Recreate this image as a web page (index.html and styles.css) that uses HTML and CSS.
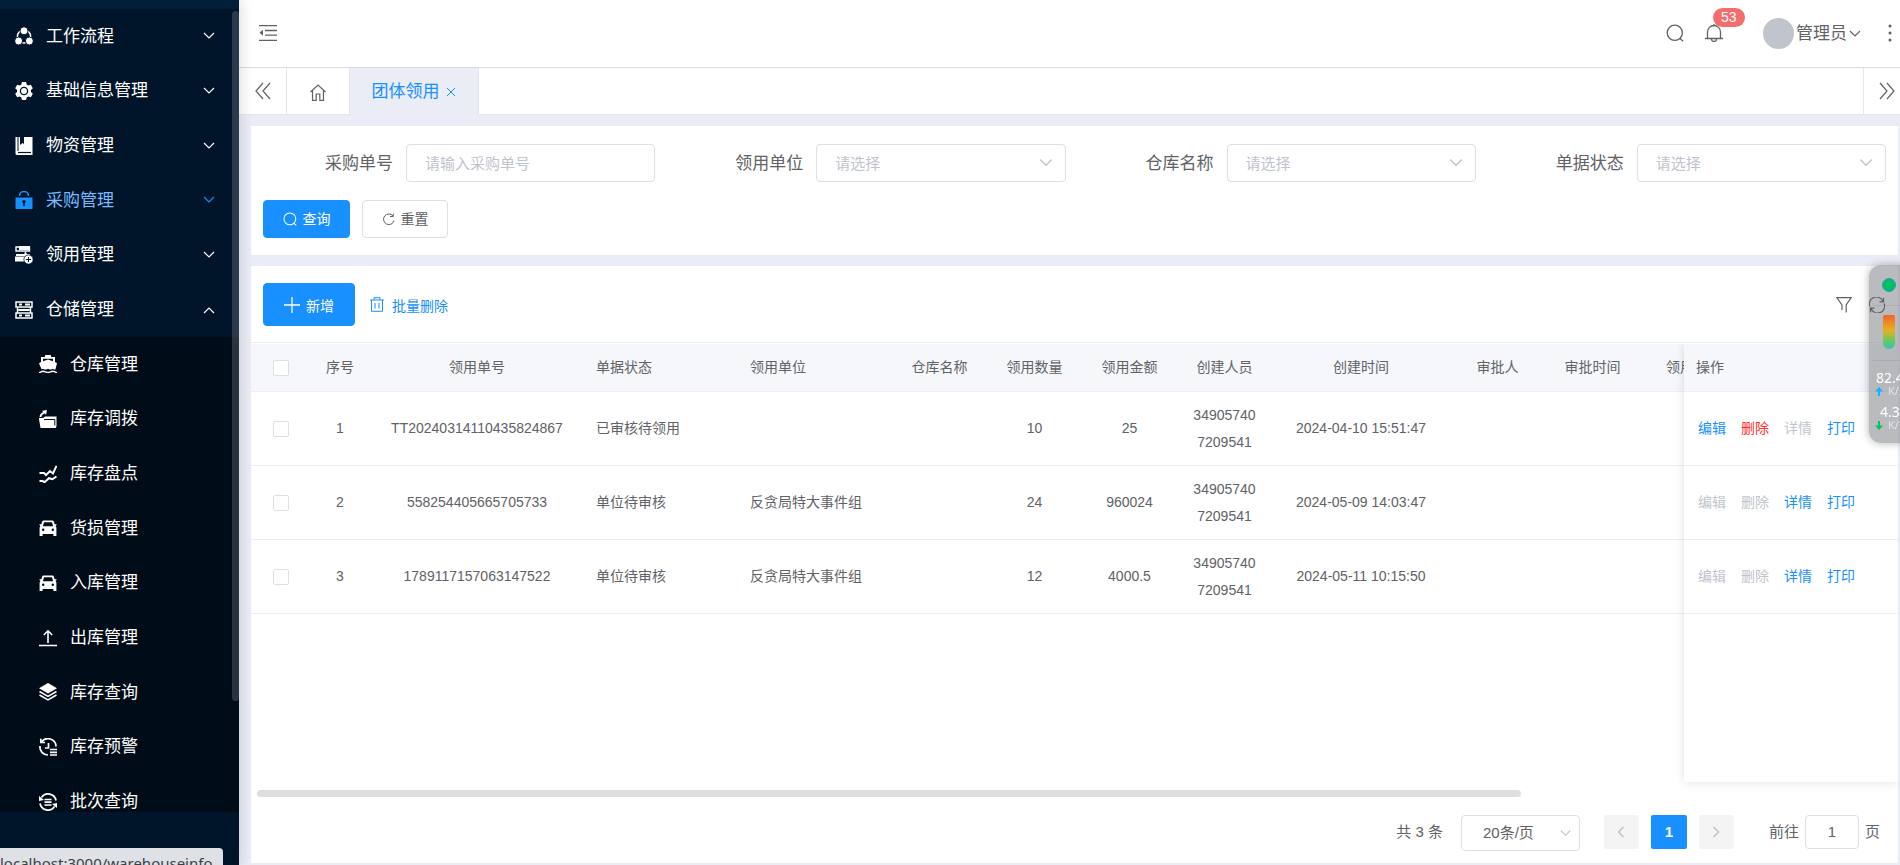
FILE: index.html
```html
<!DOCTYPE html>
<html lang="zh-CN">
<head>
<meta charset="utf-8">
<title>团体领用</title>
<link rel="stylesheet" href="styles.css">
</head>
<body>
<svg class="sprite" aria-hidden="true">
  <symbol id="down" viewBox="0 0 12 12"><path d="M1 3l5 5 5-5" fill="none" stroke="currentColor" stroke-width="1.2"/></symbol>
  <symbol id="up" viewBox="0 0 12 12"><path d="M1 9l5-5 5 5" fill="none" stroke="currentColor" stroke-width="1.2"/></symbol>
  <symbol id="search" viewBox="0 0 18 18"><g fill="none" stroke="currentColor" stroke-width="1.3"><circle cx="8.8" cy="8.8" r="7.6"/><path d="M13.700 14.200l3.300 3"/></g></symbol>
  <symbol id="car" viewBox="0 0 18 18"><path fill="currentColor" fill-rule="evenodd" d="M4.6 1.5h8.8c.7 0 1.200.4 1.400 1l.9 3 1.300-.6.8 1.100-1.300.8.9 1.700V17h-3v-2H3.600v2h-3V8.500l.9-1.700L.2 6 1 4.900l1.300.6.9-3c.2-.6.7-1 1.400-1zM5 3.200L3.900 7.200h10.200L13 3.200zM4.200 9.500a1.200 1.200 0 100 2.400 1.200 1.200 0 000-2.400zm9.600 0a1.200 1.200 0 100 2.400 1.200 1.200 0 000-2.400z"/></symbol>
</svg>
<div class="app">
  <nav class="sidebar">
    <div class="menu-scroll">
      <ul class="menu">
        <li><a href="#"><svg class="ico" viewBox="0 0 18 18"><circle cx="9" cy="9.500" r="6.600" fill="none" stroke="currentColor" stroke-width="1.500"/><g fill="currentColor" stroke="#001529" stroke-width="1"><circle cx="9" cy="3.800" r="4"/><circle cx="3.600" cy="14" r="4"/><circle cx="14.400" cy="14" r="4"/></g></svg><span>工作流程</span><svg class="arrow"><use href="#down"/></svg></a></li>
        <li><a href="#"><svg class="ico" viewBox="0 0 18 18"><path fill="currentColor" d="M7 0h4l.7 2.600 1.500.9 2.600-.8 2 3.500L16 8v2l1.800 1.800-2 3.500-2.600-.8-1.500.9L11 18H7l-.7-2.600-1.500-.9-2.600.8-2-3.500L2 10V8L.2 6.200l2-3.500 2.600.8 1.500-.9z"/><circle cx="9" cy="9" r="3.600" fill="none" stroke="#001529" stroke-width="1.300"/></svg><span>基础信息管理</span><svg class="arrow"><use href="#down"/></svg></a></li>
        <li><a href="#"><svg class="ico" viewBox="0 0 18 18"><path fill="currentColor" d="M.5 0h2v14.500h-2zM3.500 0H5v8l2.500-2L9 7V0h8.500v14H3.500zM.5 14H17.500v4H2a1.500 1.500 0 01-1.500-1.500z"/><path d="M3 15.500h13" stroke="#001529" stroke-width="1.200"/></svg><span>物资管理</span><svg class="arrow"><use href="#down"/></svg></a></li>
        <li class="active"><a href="#"><svg class="ico" viewBox="0 0 18 18"><path d="M4.600 5V4.500a4.400 4.000 0 018.800 0V5" fill="none" stroke="currentColor" stroke-width="1.500"/><path fill="currentColor" d="M.5 6.500h17V18H.5z"/><circle cx="9" cy="10.800" r="1.700" fill="#001529"/><path d="M9 11v4" stroke="#001529" stroke-width="1.500"/></svg><span>采购管理</span><svg class="arrow"><use href="#down"/></svg></a></li>
        <li><a href="#"><svg class="ico" viewBox="0 0 18 18"><path d="M1 1h13.500v4H1z" fill="none" stroke="currentColor" stroke-width="1.400"/><path fill="currentColor" d="M4 0h11v4H4zM1 8h10v2H1zM10 5l2 3h3v2H9zM0 10.500h10v5H0z"/><circle cx="13.500" cy="13.500" r="4.600" fill="currentColor" stroke="#001529" stroke-width=".8"/><path d="M11 13.500h5M13.500 11v5" stroke="#001529"/></svg><span>领用管理</span><svg class="arrow"><use href="#down"/></svg></a></li>
        <li><a href="#"><svg class="ico" viewBox="0 0 18 18"><g fill="none" stroke="currentColor" stroke-width="1.500"><path d="M1 1h16v5H1zM1 12h16v5H1zM2.500 9h13M2.500 6v6M15.500 6v6"/><path d="M4 3.500h3M10 3.500h5M4 14.500h3M10 14.500h5M4 9h10" stroke-width="2"/></g></svg><span>仓储管理</span><svg class="arrow"><use href="#up"/></svg></a></li>
      </ul>
      <ul class="submenu">
        <li><a href="#"><svg class="ico" viewBox="0 0 18 18"><path fill="currentColor" fill-rule="evenodd" d="M6 0h6v2h4v5l2 1.200-1.600 6.300c-1.500 0-2-.8-2.500-.8s-1.300.8-2.500.8-1.900-.8-2.400-.8-1.300.8-2.500.8-2-.8-2.500-.8-1 .6-1.500.6L0 8.200 2 7V2h4zM4 3.700V6.300L9 4.500l5 1.800V3.700z"/><path d="M0 17.500c2 0 2-1.300 4-1.300s3 1.300 5 1.300 3-1.300 5-1.300 2 1.300 4 1.300" fill="none" stroke="currentColor" stroke-width="1.400"/></svg><span>仓库管理</span></a></li>
        <li><a href="#"><svg class="ico" viewBox="0 0 18 18"><path fill="currentColor" d="M0 8h4l2-1.500h11.500V16l-.7 2H1.500L0 9z"/><path d="M5 9.500h10.800v6" fill="none" stroke="#000c17" stroke-width="1"/><path fill="currentColor" d="M.5 7C.8 4 2.500 2.500 4 2.200L3.300.8 8 0 7 4.800 5.800 3.600C3.500 4.300 2.500 5.500 2.500 7z"/></svg><span>库存调拨</span></a></li>
        <li><a href="#"><svg class="ico" viewBox="0 0 18 18"><path d="M.5 8h4.500l2 2 4-4 3 2.500L17.500.8M.5 16h3l2 1.200 4.500-4 3.500 1 4-2.700" fill="none" stroke="currentColor" stroke-width="2"/></svg><span>库存盘点</span></a></li>
        <li><a href="#"><svg class="ico"><use href="#car"/></svg><span>货损管理</span></a></li>
        <li><a href="#"><svg class="ico"><use href="#car"/></svg><span>入库管理</span></a></li>
        <li><a href="#"><svg class="ico" viewBox="0 0 18 18"><path d="M9 14V2M4.800 6L9 1.800 13.200 6M0 16.500h18" fill="none" stroke="currentColor" stroke-width="1.600"/></svg><span>出库管理</span></a></li>
        <li><a href="#"><svg class="ico" viewBox="0 0 18 18"><path fill="currentColor" d="M9 0l9 5.200-9 5.300L0 5.200z"/><path d="M.5 8.500L9 13.500l8.500-5M.5 12L9 17l8.500-5" fill="none" stroke="currentColor" stroke-width="1.500"/></svg><span>库存查询</span></a></li>
        <li><a href="#"><svg class="ico" viewBox="0 0 18 18"><g fill="none" stroke="currentColor" stroke-width="1.700"><path d="M2.500 4A8 8 0 0117 8.500M1 8a8 8 0 008 9M9.500 5v5H6M11 11.500h7M11 14.300h7M11 17h7"/><path d="M1.800.8v3.700H6"/></g></svg><span>库存预警</span></a></li>
        <li><a href="#"><svg class="ico" viewBox="0 0 18 18"><g fill="none" stroke="currentColor" stroke-width="1.700"><path d="M2.500 4.500A8 8 0 0117 7.500M1 10.500a8 8 0 0014.500 3M5.500 6.500h7M5.500 9.200h7M5.500 12h7"/></g><path fill="currentColor" d="M0 3v5l5-1zM18 15v-5l-5 1z"/></svg><span>批次查询</span></a></li>
      </ul>
      <div class="menu-thumb"></div>
    </div>
  </nav>

  <div class="main">
    <header class="topbar">
      <button class="icon-btn" aria-label="折叠菜单"><svg width="18" height="16" viewBox="0 0 18 16"><path d="M0 .7h18M6 5.500h12M6 10.200h12M0 15.300h18" fill="none" stroke="currentColor" stroke-width="1.300"/><path d="M4 4.800v6L.5 7.800z" fill="currentColor"/></svg></button>
      <div class="tools">
        <button class="icon-btn" aria-label="搜索"><svg width="18" height="18"><use href="#search"/></svg></button>
        <button class="icon-btn bell" aria-label="通知"><svg width="18" height="18" viewBox="0 0 18 18"><path d="M9 0v1.500M0 14.500h18M2.500 14.500V8a6.500 6.500 0 0113 0v6.500M6.500 15a2.500 2.500 0 005 0" fill="none" stroke="currentColor" stroke-width="1.300"/></svg><span class="badge">53</span></button>
        <button class="user"><span class="avatar"></span><span>管理员</span><svg width="12" height="12"><use href="#down"/></svg></button>
        <button class="icon-btn" aria-label="更多"><svg width="4" height="18" viewBox="0 0 4 18"><g fill="currentColor"><circle cx="2" cy="2" r="1.500"/><circle cx="2" cy="9" r="1.500"/><circle cx="2" cy="16" r="1.500"/></g></svg></button>
      </div>
    </header>
    <div class="tabs">
      <button class="tab-nav" aria-label="向左"><svg width="16" height="18" viewBox="0 0 16 18"><path d="M8 1L1 9l7 8M15 1L8 9l7 8" fill="none" stroke="currentColor" stroke-width="1.200"/></svg></button>
      <a class="tab home" href="#" aria-label="首页"><svg width="16" height="17" viewBox="0 0 16 17"><path d="M.5 8L8 1l7.500 7M2.500 6.500v9.800h3.700V10h3.600v6.300h3.700V6.500" fill="none" stroke="currentColor" stroke-width="1.200"/></svg></a>
      <a class="tab current" href="#"><span>团体领用</span><svg width="10" height="10" viewBox="0 0 10 10"><path d="M1 1l8 8M9 1L1 9" stroke="currentColor"/></svg></a>
      <span class="tab-space"></span>
      <button class="tab-nav last" aria-label="向右"><svg width="16" height="18" viewBox="0 0 16 18"><path d="M1 1l7 8-7 8M8 1l7 8-7 8" fill="none" stroke="currentColor" stroke-width="1.200"/></svg></button>
    </div>

    <main class="content">
      <form class="card search">
        <div class="fields">
          <div class="field"><label for="f1">采购单号</label><input id="f1" type="text" placeholder="请输入采购单号"></div>
          <div class="field"><label for="f2">领用单位</label><span class="pick"><select id="f2"><option>请选择</option></select><svg><use href="#down"/></svg></span></div>
          <div class="field"><label for="f3">仓库名称</label><span class="pick"><select id="f3"><option>请选择</option></select><svg><use href="#down"/></svg></span></div>
          <div class="field"><label for="f4">单据状态</label><span class="pick"><select id="f4"><option>请选择</option></select><svg><use href="#down"/></svg></span></div>
        </div>
        <div class="actions">
          <button type="button" class="btn primary"><svg width="14" height="14"><use href="#search"/></svg>查询</button>
          <button type="button" class="btn reset"><svg width="13" height="13" viewBox="0 0 13 13"><path d="M11 3A5.300 5.300 0 1012 7.500M11.300.5V3.500H8" fill="none" stroke="currentColor"/></svg>重置</button>
        </div>
      </form>

      <section class="card list">
        <div class="toolbar">
          <button class="btn primary add"><svg width="16" height="16" viewBox="0 0 16 16"><path d="M8 0v16M0 8h16" stroke="currentColor" stroke-width="1.300"/></svg><span>新增</span></button>
          <button class="link batch"><svg width="14" height="15" viewBox="0 0 14 15"><path d="M0 3h14M4 3V.7h6V3M1.500 3v11.300h11V3M5 6v5.500M9 6v5.500" fill="none" stroke="currentColor"/></svg><span>批量删除</span></button>
          <span class="grow"></span>
          <button class="icon-btn" aria-label="筛选"><svg width="16" height="16" viewBox="0 0 16 16"><path d="M10.200 15.500V8L15.200.7H.8L6 8v5" fill="none" stroke="currentColor" stroke-width="1.200"/></svg></button>
          <button class="icon-btn refresh" aria-label="刷新"><svg width="16" height="16" viewBox="0 0 16 16"><path d="M.8 9.500A7 7 0 0114 4.500M15.200 6.500A7 7 0 012 11.500M14.500.8v4H10.500M1.500 15.200v-4h4" fill="none" stroke="currentColor" stroke-width="1.200"/></svg></button>
        </div>
        <div class="grid">
          <div class="grid-main">
            <table>
              <colgroup><col class="w59"><col class="w60"><col class="w214"><col class="w154"><col class="w154"><col class="w95"><col class="w95"><col class="w95"><col class="w95"><col class="w178"><col class="w95"><col class="w95"><col class="w108"></colgroup>
              <thead><tr><th><input type="checkbox" aria-label="全选"></th><th>序号</th><th>领用单号</th><th class="l">单据状态</th><th class="l">领用单位</th><th>仓库名称</th><th>领用数量</th><th>领用金额</th><th>创建人员</th><th>创建时间</th><th>审批人</th><th>审批时间</th><th>领用时间</th></tr></thead>
              <tbody>
                <tr><td><input type="checkbox" aria-label="选择 1"></td><td>1</td><td>TT20240314110435824867</td><td class="l">已审核待领用</td><td class="l"></td><td></td><td>10</td><td>25</td><td>349057407209541</td><td>2024-04-10 15:51:47</td><td></td><td></td><td></td></tr>
                <tr><td><input type="checkbox" aria-label="选择 2"></td><td>2</td><td>558254405665705733</td><td class="l">单位待审核</td><td class="l">反贪局特大事件组</td><td></td><td>24</td><td>960024</td><td>349057407209541</td><td>2024-05-09 14:03:47</td><td></td><td></td><td></td></tr>
                <tr><td><input type="checkbox" aria-label="选择 3"></td><td>3</td><td>1789117157063147522</td><td class="l">单位待审核</td><td class="l">反贪局特大事件组</td><td></td><td>12</td><td>4000.5</td><td>349057407209541</td><td>2024-05-11 10:15:50</td><td></td><td></td><td></td></tr>
              </tbody>
            </table>
          </div>
          <div class="grid-fixed">
            <table>
              <thead><tr><th class="l">操作</th></tr></thead>
              <tbody>
                <tr><td><div class="ops"><button class="link">编辑</button><button class="link danger">删除</button><button class="link" disabled>详情</button><button class="link">打印</button></div></td></tr>
                <tr><td><div class="ops"><button class="link" disabled>编辑</button><button class="link" disabled>删除</button><button class="link">详情</button><button class="link">打印</button></div></td></tr>
                <tr><td><div class="ops"><button class="link" disabled>编辑</button><button class="link" disabled>删除</button><button class="link">详情</button><button class="link">打印</button></div></td></tr>
              </tbody>
            </table>
          </div>
        </div>
        <div class="hscroll"><div class="hthumb"></div></div>
        <div class="pager">
          <span>共 3 条</span>
          <span class="pick size"><select aria-label="每页条数"><option>20条/页</option></select><svg><use href="#down"/></svg></span>
          <div class="pages">
            <button disabled aria-label="上一页"><svg width="8" height="12" viewBox="0 0 8 12"><path d="M6.500 1l-5 5 5 5" fill="none" stroke="currentColor" stroke-width="1.700"/></svg></button>
            <button class="on">1</button>
            <button disabled aria-label="下一页"><svg width="8" height="12" viewBox="0 0 8 12"><path d="M1.500 1l5 5-5 5" fill="none" stroke="currentColor" stroke-width="1.700"/></svg></button>
          </div>
          <label class="jump">前往<input type="text" value="1">页</label>
        </div>
      </section>
    </main>
  </div>
</div>

<aside class="monitor">
  <span class="lamp"></span>
  <div class="gauge"><span></span></div>
  <div class="rate"><b>82.4</b><small><svg width="8" height="9" viewBox="0 0 8 9"><path d="M4 0l4 4.500H5V9H3V4.500H0z" fill="#16b0ff"/></svg>K/s</small></div>
  <div class="rate low"><b>4.3</b><small><svg width="8" height="9" viewBox="0 0 8 9"><path d="M4 9l4-4.500H5V0H3v4.500H0z" fill="#08c25e"/></svg>K/s</small></div>
</aside>
<div class="status">localhost:3000/warehouseinfo</div>
</body>
</html>
```

FILE: styles.css
```css
* { box-sizing: border-box; }
body {
  margin: 0;
  overflow: hidden;
  color: #606266;
  background: #eaedf5;
  font: 14px/27px "Liberation Sans", "Noto Sans CJK SC", sans-serif;
}
button, input, select { font: inherit; color: inherit; }
button { padding: 0; border: 0; background: none; cursor: pointer; }
a { color: inherit; text-decoration: none; }
ul { margin: 0; padding: 0; list-style: none; }
svg { display: block; flex: none; }
.sprite { display: none; }
.app { display: flex; height: 100vh; }

/* sidebar */
.sidebar {
  flex: none;
  width: 239px;
  padding: 9px 0 53px;
  background: linear-gradient(#001f38 9px, #001529 9px);
  box-shadow: 2px 0 12px rgba(0, 21, 41, .14);
  z-index: 2;
}
.menu-scroll { position: relative; height: 100%; overflow: hidden; color: #fff; font-size: 17px; }
.menu, .submenu { display: grid; grid-auto-rows: 1fr; }
.menu { height: 328px; }
.submenu { height: 492px; background: #000c17; }
.menu a, .submenu a { display: flex; align-items: center; gap: 13px; height: 100%; padding: 0 24px 0 15px; }
.submenu a { padding-left: 39px; }
.menu span { flex: 1; }
.ico { width: 18px; height: 18px; }
.arrow { width: 12px; height: 12px; }
.active { color: #1890ff; }
.active span { color: #79bbff; }
.menu-thumb { position: absolute; top: 2px; right: 0; width: 7px; height: 690px; border-radius: 4px; background: rgba(144, 147, 153, .3); }

/* header */
.main { flex: 1; min-width: 0; display: flex; flex-direction: column; }
.topbar { flex: none; display: flex; justify-content: space-between; height: 68px; padding: 0 8px 2px 20px; border-bottom: 1px solid #d8dce5; background: #fff; }
.tools { display: flex; gap: 30px; }
.tools, .topbar, .icon-btn { align-items: center; }
.icon-btn { display: flex; }
.tools .bell { position: relative; margin: 0 10px 0 -9px; }
.badge { position: absolute; left: 8px; top: -16px; height: 19px; padding: 0 8px; border-radius: 10px; color: #fff; background: #f56c6c; font-size: 14px; line-height: 19px; }
.user { display: flex; align-items: center; gap: 2px; margin-right: -3px; padding-top: 2px; font-size: 17px; }
.avatar { width: 31px; height: 31px; border-radius: 50%; background: #c0c4cc; }
.tabs { flex: none; display: flex; height: 47px; background: #fff; }
.tab-nav { width: 48px; display: grid; place-items: center; border: solid #e4e7ed; border-width: 0 1px 1px 0; }
.tab-nav.last { width: 37px; padding-left: 10px; border-width: 0 0 1px 1px; }
.tab { display: flex; align-items: center; justify-content: center; font-size: 17px; border-right: 1px solid #e4e7ed; }
.home { width: 63px; padding-top: 2px; border-bottom: 1px solid #e4e7ed; }
.current { gap: 6px; width: 129px; padding-right: 1px; color: #1890ff; background: #eaedf5; }
.tab-space { flex: 1; border-bottom: 1px solid #e4e7ed; }

/* content */
.content { flex: 1; min-height: 0; display: flex; flex-direction: column; gap: 11px; padding: 11px 2px 2px 12px; }
.card { background: #fff; }
.search { padding: 18px 12px 17px; }
.fields { display: grid; grid-template-columns: repeat(4, 1fr); gap: 18px; }
.field { display: flex; align-items: center; }
.field label { flex: none; width: 143px; padding-right: 13px; text-align: right; font-size: 17px; }
.field input, .field .pick { flex: 1; min-width: 0; height: 38px; }
.field input, .pick select { border: 1px solid #dcdfe6; border-radius: 4px; background: #fff; padding: 0 18px; font-size: 15px; outline: 0; }
input::placeholder, .field select { color: #bfc3cc; }
.pick { display: grid; }
.pick select { grid-area: 1 / 1; width: 100%; height: 100%; appearance: none; }
.pick svg { grid-area: 1 / 1; justify-self: end; align-self: center; width: 14px; height: 14px; margin-right: 13px; color: #c0c4cc; pointer-events: none; }
.actions { display: flex; gap: 12px; margin-top: 18px; }
.btn { display: flex; align-items: center; justify-content: center; gap: 6px; width: 87px; height: 38px; border: 1px solid #dcdfe6; border-radius: 4px; background: #fff; }
.btn.reset { width: 86px; }
.btn.primary { color: #fff; border-color: #1890ff; background: #1890ff; }
.btn.add { width: 92px; height: 43px; }

/* list */
.list { flex: 1; min-height: 0; display: flex; flex-direction: column; }
.toolbar { display: flex; align-items: center; padding: 17px 13px 16px 12px; border-bottom: 1px solid #ebeef5; margin-bottom: 1px; }
.toolbar span { padding-top: 4px; }
.batch { display: flex; align-items: center; gap: 8px; margin-left: 15px; }
.grow { flex: 1; }
.toolbar .icon-btn + .icon-btn { margin-left: 17px; }
.refresh { position: relative; z-index: 4; }
.link { color: #1890ff; }
.danger { color: #ff2d2d; }
.link:disabled { color: #c0c4cc; }
.grid { flex: 1; min-height: 0; display: flex; }
.grid-main { flex: 1; min-width: 0; overflow: hidden; }
.grid-fixed { flex: none; width: 214px; background: #fff; box-shadow: 0 0 10px rgba(0, 0, 0, .12); clip-path: inset(0 0 -20px -20px); }
table { border-collapse: separate; border-spacing: 0; table-layout: fixed; }
.grid-main table { width: 1497px; }
.grid-fixed table { width: 100%; }
th, td { padding: 0 14px; border-bottom: 1px solid #ebeef5; text-align: center; overflow-wrap: anywhere; }
th { height: 48px; background: #f5f7fb; font-weight: 400; white-space: nowrap; }
td { height: 74px; }
.l { padding-left: 12px; text-align: left; }
.w59 { width: 59px; } .w60 { width: 60px; } .w95 { width: 95px; } .w108 { width: 108px; }
.w154 { width: 154px; } .w178 { width: 178px; } .w214 { width: 214px; }
[type="checkbox"] { display: block; width: 16px; height: 16px; margin: 0 auto; appearance: none; border: 1px solid #dcdfe6; border-radius: 2px; background: #fff; }
.ops { display: flex; gap: 15px; }
.hscroll { padding: 8px 0 0 6px; }
.hthumb { width: 77%; height: 7px; border-radius: 4px; background: #dddee0; }
.pager { display: flex; align-items: center; justify-content: flex-end; padding: 18px 18px 14px; font-size: 15px; line-height: 34px; }
.size { width: 119px; height: 34px; margin: 0 24px 0 18px; }
.size select { padding-left: 21px; font-size: 15px; }
.size svg { width: 11px; height: 11px; margin-right: 9px; }
.pages { display: flex; gap: 12px; margin-right: 35px; }
.pages button { display: grid; place-items: center; width: 35px; height: 34px; border-radius: 2px; color: #c0c4cc; background: #f4f4f5; }
.pages .on { width: 36px; color: #fff; background: #1890ff; font-weight: 700; }
.jump { display: flex; gap: 6px; }
.jump input { width: 54px; height: 34px; padding: 0; border: 1px solid #dcdfe6; border-radius: 4px; text-align: center; outline: 0; }

/* floating overlays */
.monitor { position: fixed; z-index: 3; top: 265px; right: -12px; width: 43px; height: 178px; padding: 13px 0 0 4px; overflow: hidden; border-radius: 12px; background: rgba(140, 142, 146, .6); box-shadow: 0 0 8px rgba(0, 0, 0, .3); color: #fff; }
.lamp { display: block; width: 14px; height: 14px; margin: 0 0 13px 9px; border-radius: 50%; background: #00c060; border: 1px solid #3a8fd0; }
.gauge { height: 56px; padding: 9px 0 0 10px; border: solid rgba(120, 130, 140, .25); border-width: 1px 0; }
.gauge span { display: block; width: 12px; height: 34px; border-radius: 2px 2px 6px 6px; background: linear-gradient(#f0642d, #e8b020 45%, #6cc85a 75%, #35c3c3); }
.rate { padding: 10px 0 0 2px; font: 14px/14px "Noto Sans", sans-serif; }
.rate b { display: block; padding-left: 1px; font-weight: 400; }
.low b { padding-left: 5px; }
.rate small { display: flex; align-items: center; gap: 5px; font-size: 11px; line-height: 12px; color: #e2e4e8; }
.low { padding-top: 8px; }
.status { position: fixed; z-index: 4; left: 0; bottom: -15px; height: 32px; padding: 0 10px 0 0; border-radius: 0 4px 0 0; background: #dee1e6; color: #3c4043; font: 15px/30px "Noto Sans", sans-serif; }
```
